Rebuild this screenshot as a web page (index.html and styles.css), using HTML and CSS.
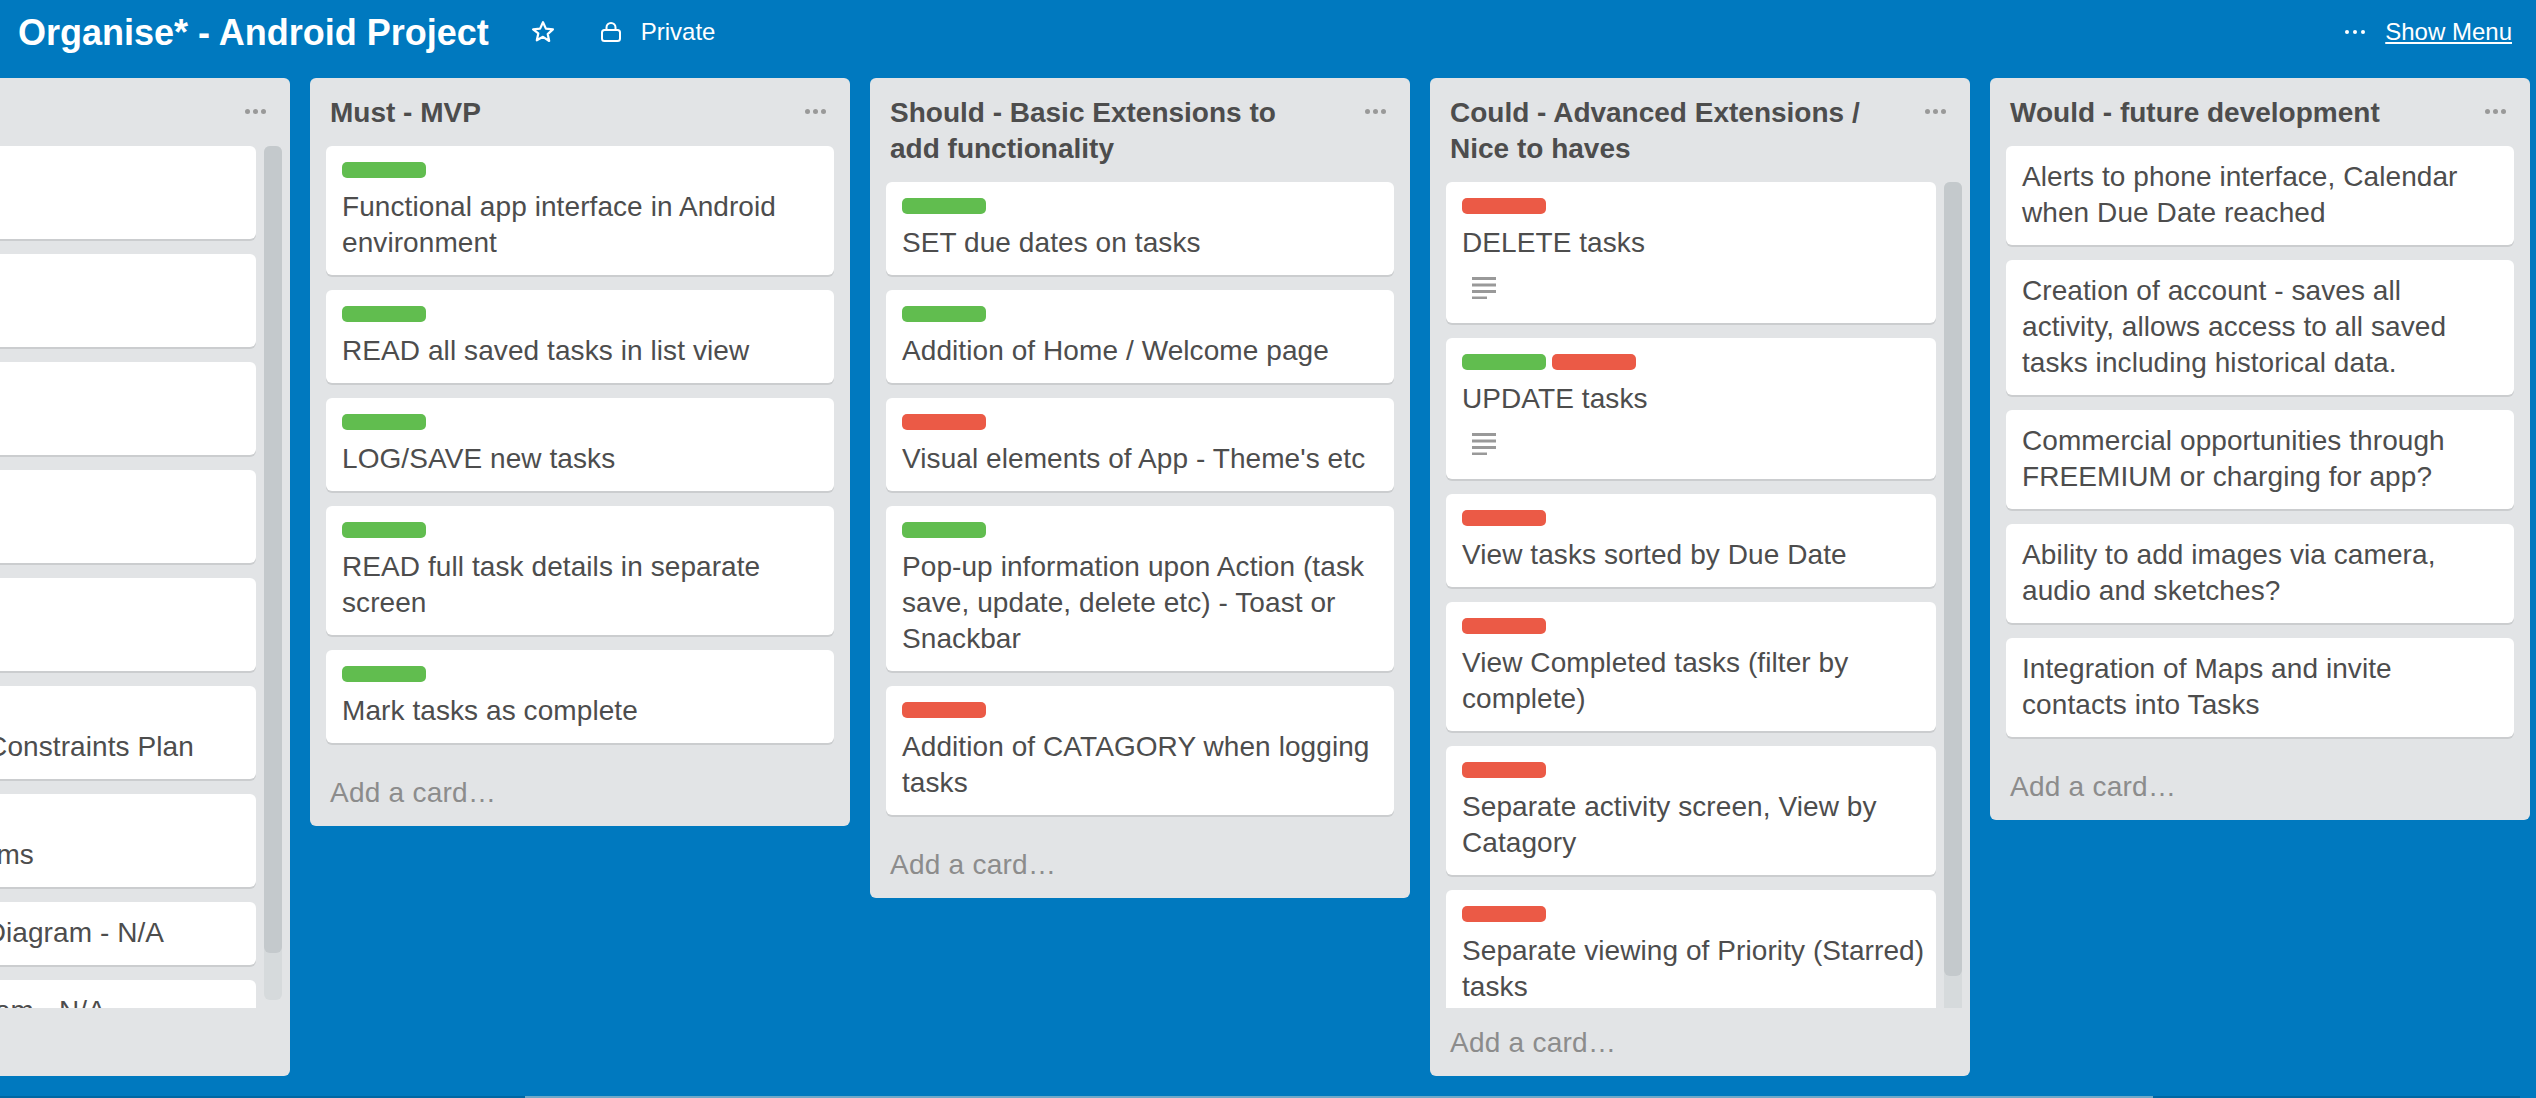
FILE: index.html
```html
<!DOCTYPE html>
<html lang="en">
<head>
<meta charset="utf-8">
<title>Organise* - Android Project</title>
<link rel="stylesheet" href="styles.css">
</head>
<body>
<header class="topbar">
  <h1 class="board-title">Organise* - Android Project</h1>
  <svg class="star" viewBox="0 0 24 24" width="24" height="24"><path d="M12 2.2l2.9 6.4 7 .8-5.200 4.700 1.500 6.900L12 16.800l-6.200 3.500 1.500-6.900L2.100 9.400l7-.8z" fill="none" stroke="#fff" stroke-width="2.200" stroke-linejoin="round"/></svg>
  <svg class="lock" viewBox="0 0 20 20" width="20" height="20"><path d="M5.500 8V5.500a4.500 4.500 0 0 1 9 0V8" fill="none" stroke="#fff" stroke-width="2"/><rect x="1" y="8" width="18" height="11" rx="2.500" fill="none" stroke="#fff" stroke-width="2"/></svg>
  <span class="privacy">Private</span>
  <span class="spacer"></span>
  <span class="menu-dots"><i></i><i></i><i></i></span>
  <a class="show-menu" href="#">Show Menu</a>
</header>
<main class="board">
  <section class="list">
    <div class="list-head"><h2 class="list-title">Backlog</h2><span class="dots"><i></i><i></i><i></i></span></div>
    <div class="cards scrolling">
      <div class="card"><span class="labels"><b class="label green"></b></span><p>Project outline</p></div>
      <div class="card"><span class="labels"><b class="label green"></b></span><p>Problem</p></div>
      <div class="card"><span class="labels"><b class="label green"></b></span><p>Target users</p></div>
      <div class="card"><span class="labels"><b class="label green"></b></span><p>Requirements</p></div>
      <div class="card"><span class="labels"><b class="label green"></b></span><p>Wireframes</p></div>
      <div class="card"><span class="labels"><b class="label green"></b></span><p>Project Times &amp; Constraints Plan</p></div>
      <div class="card"><span class="labels"><b class="label green"></b></span><p>Use Case Diagrams</p></div>
      <div class="card plain"><p>Entity Relations Diagram - N/A</p></div>
      <div class="card plain"><p>Class Flow Diagram - N/A</p></div>
      <div class="track"><div class="thumb thumb-a"></div></div>
    </div>
    <div class="add">Add a card…</div>
  </section>
  <section class="list">
    <div class="list-head"><h2 class="list-title">Must - MVP</h2><span class="dots"><i></i><i></i><i></i></span></div>
    <div class="cards">
      <div class="card"><span class="labels"><b class="label green"></b></span><p>Functional app interface in Android<br>environment</p></div>
      <div class="card"><span class="labels"><b class="label green"></b></span><p>READ all saved tasks in list view</p></div>
      <div class="card"><span class="labels"><b class="label green"></b></span><p>LOG/SAVE new tasks</p></div>
      <div class="card"><span class="labels"><b class="label green"></b></span><p>READ full task details in separate<br>screen</p></div>
      <div class="card"><span class="labels"><b class="label green"></b></span><p>Mark tasks as complete</p></div>
    </div>
    <div class="add">Add a card…</div>
  </section>
  <section class="list">
    <div class="list-head"><h2 class="list-title">Should - Basic Extensions to add functionality</h2><span class="dots"><i></i><i></i><i></i></span></div>
    <div class="cards">
      <div class="card"><span class="labels"><b class="label green"></b></span><p>SET due dates on tasks</p></div>
      <div class="card"><span class="labels"><b class="label green"></b></span><p>Addition of Home / Welcome page</p></div>
      <div class="card"><span class="labels"><b class="label red"></b></span><p>Visual elements of App - Theme's etc</p></div>
      <div class="card"><span class="labels"><b class="label green"></b></span><p>Pop-up information upon Action (task<br>save, update, delete etc) - Toast or<br>Snackbar</p></div>
      <div class="card"><span class="labels"><b class="label red"></b></span><p>Addition of CATAGORY when logging<br>tasks</p></div>
    </div>
    <div class="add">Add a card…</div>
  </section>
  <section class="list">
    <div class="list-head"><h2 class="list-title">Could - Advanced Extensions / Nice to haves</h2><span class="dots"><i></i><i></i><i></i></span></div>
    <div class="cards scrolling">
      <div class="card"><span class="labels"><b class="label red"></b></span><p>DELETE tasks</p><svg class="desc" viewBox="0 0 24 22" width="24" height="22"><path d="M0 1.500h24M0 8h24M0 14.500h24M0 21h15" stroke="#999" stroke-width="3" fill="none"/></svg></div>
      <div class="card"><span class="labels"><b class="label green"></b><b class="label red"></b></span><p>UPDATE tasks</p><svg class="desc" viewBox="0 0 24 22" width="24" height="22"><path d="M0 1.500h24M0 8h24M0 14.500h24M0 21h15" stroke="#999" stroke-width="3" fill="none"/></svg></div>
      <div class="card"><span class="labels"><b class="label red"></b></span><p>View tasks sorted by Due Date</p></div>
      <div class="card"><span class="labels"><b class="label red"></b></span><p>View Completed tasks (filter by<br>complete)</p></div>
      <div class="card"><span class="labels"><b class="label red"></b></span><p>Separate activity screen, View by<br>Catagory</p></div>
      <div class="card"><span class="labels"><b class="label red"></b></span><p>Separate viewing of Priority (Starred)<br>tasks</p></div>
      <div class="track"><div class="thumb thumb-b"></div></div>
    </div>
    <div class="add">Add a card…</div>
  </section>
  <section class="list">
    <div class="list-head"><h2 class="list-title">Would - future development</h2><span class="dots"><i></i><i></i><i></i></span></div>
    <div class="cards">
      <div class="card plain"><p>Alerts to phone interface, Calendar<br>when Due Date reached</p></div>
      <div class="card plain"><p>Creation of account - saves all<br>activity, allows access to all saved<br>tasks including historical data.</p></div>
      <div class="card plain"><p>Commercial opportunities through<br>FREEMIUM or charging for app?</p></div>
      <div class="card plain"><p>Ability to add images via camera,<br>audio and sketches?</p></div>
      <div class="card plain"><p>Integration of Maps and invite<br>contacts into Tasks</p></div>
    </div>
    <div class="add">Add a card…</div>
  </section>
</main>
<div class="hscroll"><div class="hthumb"></div></div>
</body>
</html>
```
FILE: styles.css
```css
* { box-sizing: border-box; }
html, body { margin: 0; height: 100%; overflow: hidden; }
body {
  position: relative;
  width: 2536px;
  height: 1098px;
  background: #0079bf;
  color: #4d4d4d;
  font-family: "Liberation Sans", Arial, sans-serif;
  font-size: 28px;
  line-height: 36px;
  display: flex;
  flex-direction: column;
}
.topbar {
  height: 78px;
  flex: none;
  display: flex;
  align-items: flex-start;
  padding: 12px 24px 0 18px;
  color: #fff;
}
.board-title { margin: 0 42px 0 0; font-size: 36px; line-height: 42px; font-weight: 700; }
.star { margin: 8px 46px 0 0; }
.lock { margin: 10px 20px 0 0; }
.privacy { font-size: 24px; line-height: 40px; }
.spacer { flex: 1; }
.menu-dots { display: flex; gap: 4px; margin: 18px 20px 0 0; }
.menu-dots i { width: 4px; height: 4px; border-radius: 50%; background: #fff; }
.show-menu { color: #fff; font-size: 24px; line-height: 40px; text-decoration: underline; }
.board {
  flex: 1;
  min-height: 0;
  display: flex;
  align-items: flex-start;
  gap: 20px;
  margin-left: -250px;
}
.list {
  width: 540px;
  flex: none;
  max-height: 998px;
  background: #e2e4e6;
  border-radius: 6px;
  display: flex;
  flex-direction: column;
}
.list-head { display: flex; justify-content: space-between; padding: 17px 24px 15px 20px; }
.list-title { margin: 0; width: 440px; font-size: 28px; line-height: 36px; font-weight: 700; color: #4d4d4d; }
.dots { display: flex; gap: 3px; padding-top: 14px; height: 19px; }
.dots i { width: 5px; height: 5px; border-radius: 50%; background: #999; }
.cards { position: relative; padding: 0 16px; overflow: hidden; }
.cards.scrolling { height: 862px; padding-right: 34px; }
.card {
  background: #fff;
  border-radius: 6px;
  box-shadow: 0 2px 0 #cbcdcf;
  padding: 16px 8px 15px 16px;
  margin-bottom: 15px;
  letter-spacing: 0.08px;
}
.card.plain { padding-top: 12px; }
.card p { margin: 0; position: relative; top: 1px; }
.labels { display: flex; gap: 6px; margin-bottom: 10px; }
.label { width: 84px; height: 16px; border-radius: 5px; }
.green { background: #61bd4f; }
.red { background: #eb5a46; }
.desc { display: block; margin: 17px 0 9px 10px; }
.add { height: 68px; padding: 17px 20px 15px; color: #8c8c8c; letter-spacing: 0.25px; }
.track { position: absolute; top: 0; right: 8px; width: 18px; height: 854px; background: #d6dadc; border-radius: 6px; }
.thumb { background: #c4c9cc; border-radius: 6px; }
.thumb-a { height: 807px; }
.thumb-b { height: 794px; }
.hscroll { position: absolute; left: 0; width: 2520px; bottom: 0; height: 2px; background: #0067a3; }
.hthumb { position: absolute; left: 525px; width: 1628px; top: 0; bottom: 0; background: #6fa9c8; }
```
